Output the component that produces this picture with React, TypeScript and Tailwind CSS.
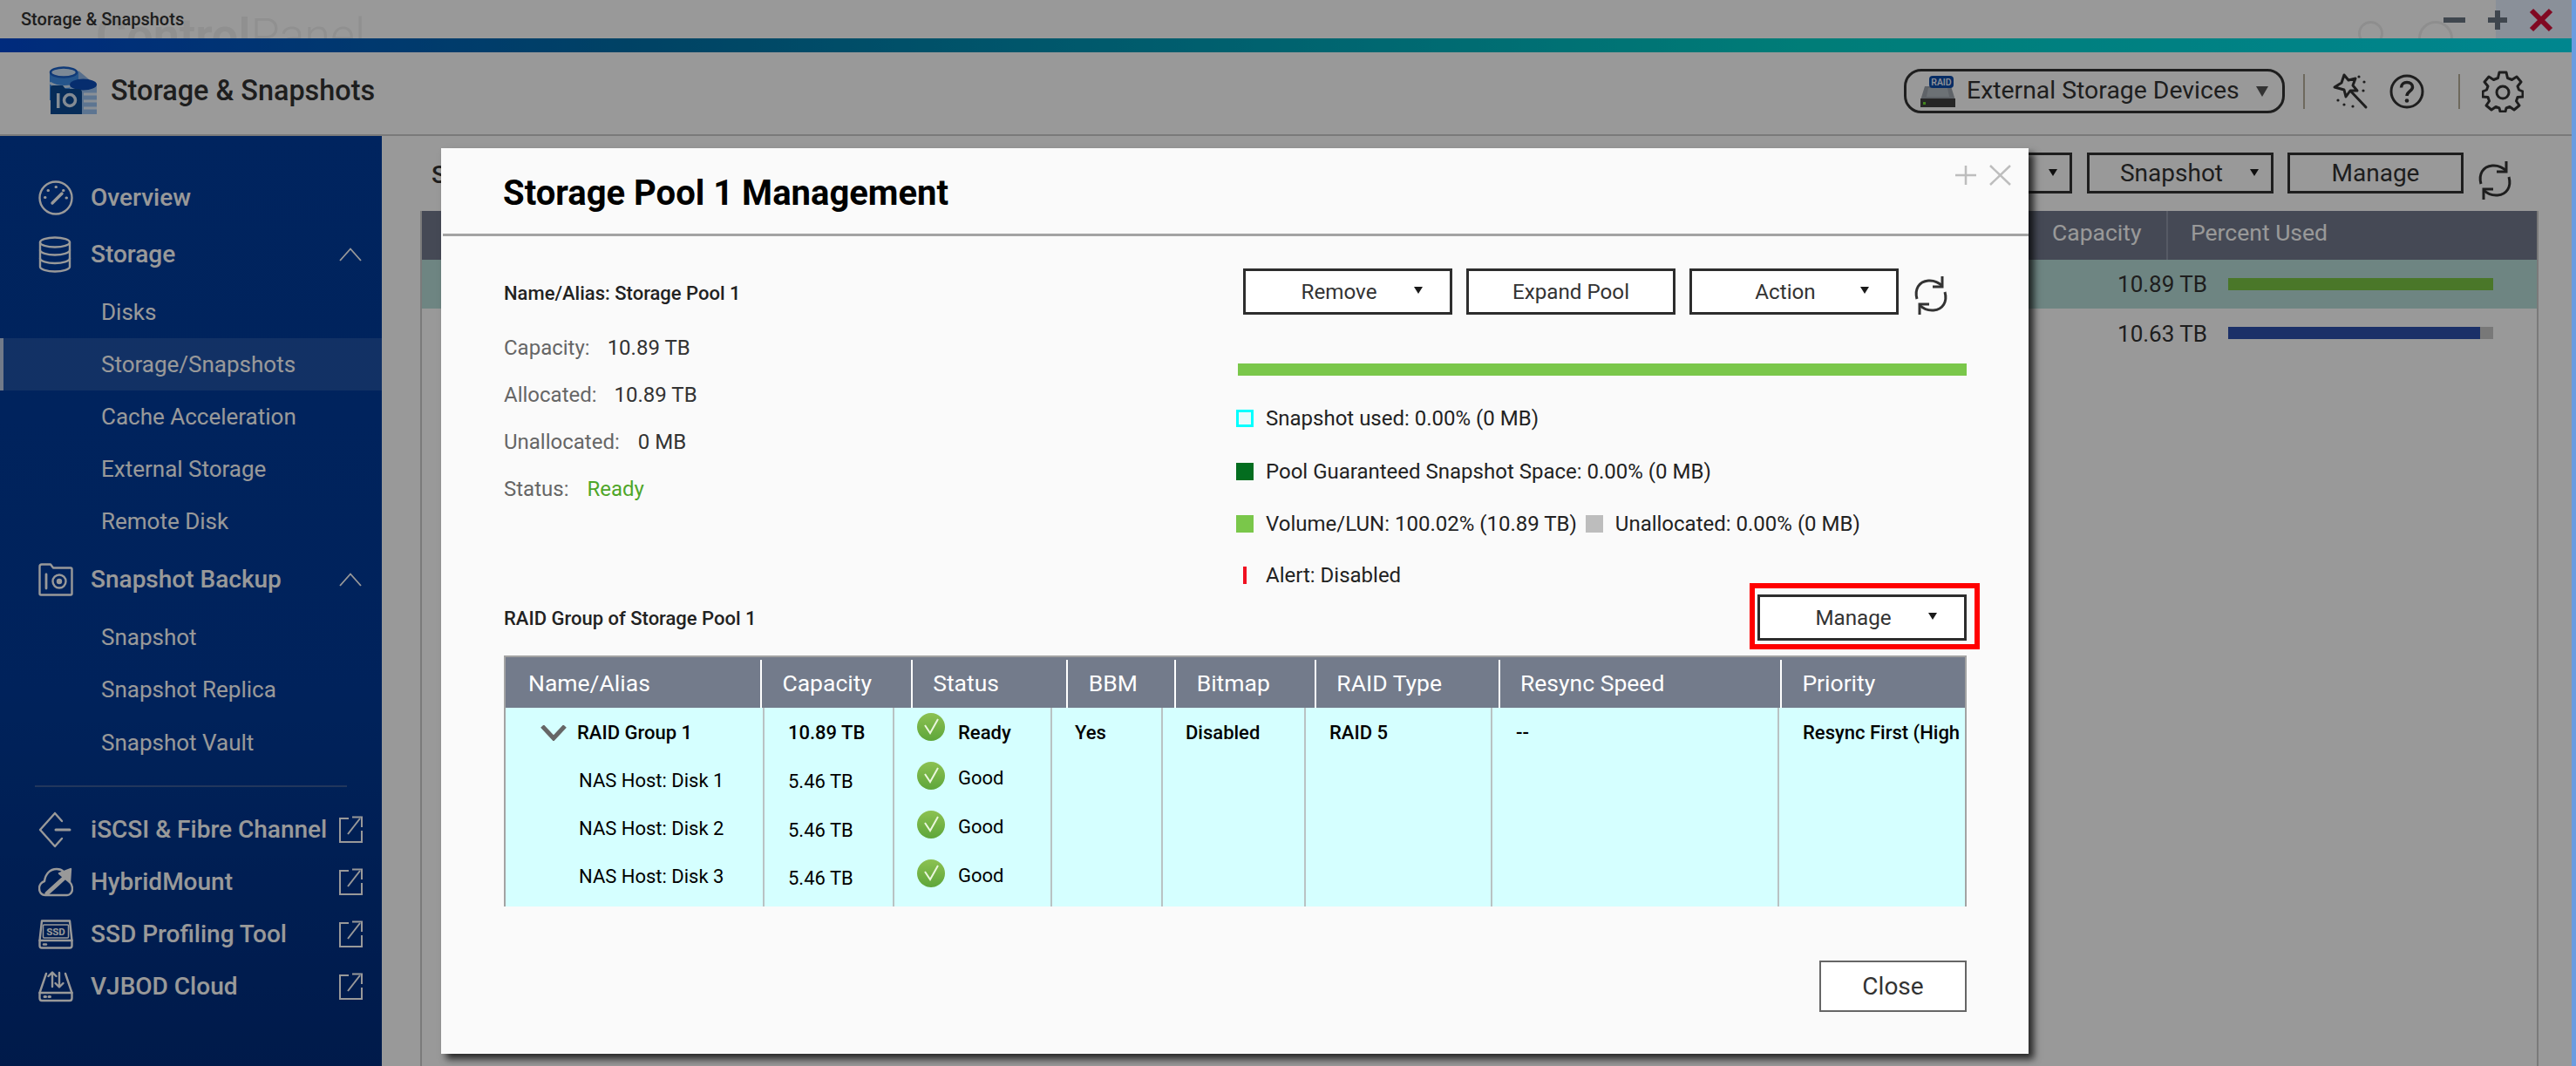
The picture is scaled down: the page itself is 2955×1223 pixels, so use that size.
import React from "react";

const Caret = ({ className = "" }: { className?: string }) => (
  <svg width="10" height="8" viewBox="0 0 10 8" className={className}>
    <polygon points="0,0 10,0 5,8" fill="#1a1a1a" />
  </svg>
);

const Refresh = ({ className = "" }: { className?: string }) => (
  <svg width="42" height="46" viewBox="0 0 40 46" fill="none" stroke="#333" strokeWidth="3" className={className}>
    <path d="M4 27C1 16 6 7 17 6C23 5.5 28 7 33 12" />
    <path d="M33 1V13H22" />
    <path d="M36 19C39 30 34 39 23 40C17 40.5 12 39 7 34" />
    <path d="M7 45V33H18" />
  </svg>
);

const Logo = () => (
  <svg width="56" height="58" viewBox="0 0 56 58">
    <path d="M1 8C1 2 34 2 34 8V40H1Z" fill="#3f8ee8" />
    <ellipse cx="17" cy="8" rx="15" ry="5.5" fill="#cfe4fa" stroke="#1c62c8" strokeWidth="2.5" />
    <path d="M1 20C10 26 26 26 34 20" stroke="#cfe4fa" strokeWidth="3" fill="none" />
    <path d="M34 6L46 16H34Z" fill="#8fb8ea" />
    <path d="M24 22C24 15 55 15 55 22V56H24Z" fill="#9cc4f2" />
    <ellipse cx="39.5" cy="22" rx="15.5" ry="6.5" fill="#0a4bb8" />
    <path d="M40 33H55M40 41H55M40 49H55" stroke="#e6f0fb" strokeWidth="3" />
    <path d="M2 56V26C2 24 3 23 5 23H16L19 27H33C36 27 38 28 38 31V56Z" fill="#0b4a94" />
    <rect x="9" y="32" width="3.5" height="17" fill="#dbe8f5" />
    <circle cx="24" cy="40" r="6.5" fill="none" stroke="#dbe8f5" strokeWidth="3.5" />
  </svg>
);

const RaidDrive = () => (
  <svg width="40" height="36" viewBox="0 0 40 36">
    <path d="M5 12H35L40 28H0Z" fill="#9ea6ae" />
    <path d="M9 14H31L33 24H7Z" fill="#b5bcc3" />
    <rect x="0" y="26" width="40" height="10" fill="#404040" />
    <rect x="3" y="30" width="3" height="3" fill="#6fe030" />
    <rect x="10" y="0" width="28" height="14" rx="4" fill="#0d4ba8" />
    <text x="24" y="11" textAnchor="middle" fontSize="10.5" fontWeight="500" fill="#f2f6ff" fontFamily="Roboto">RAID</text>
  </svg>
);

const Wand = () => (
  <svg width="42" height="42" viewBox="0 0 42 42" fill="none" stroke="#333" strokeWidth="3" strokeLinejoin="round">
    <path d="M14 2L19 8L27 6L24 14L29 20L21 20L16 27L14 19L3 16L11 11Z" />
    <path d="M22 21L39 39" strokeLinecap="round" />
    <g fill="#333" stroke="none">
      <circle cx="31" cy="4" r="1.6" /><circle cx="37" cy="10" r="1.6" /><circle cx="36" cy="20" r="1.6" />
      <circle cx="7" cy="31" r="1.6" /><circle cx="14" cy="36" r="1.6" /><circle cx="24" cy="38" r="1.6" />
    </g>
  </svg>
);

const Help = () => (
  <svg width="40" height="40" viewBox="0 0 40 40" fill="none" stroke="#333" strokeWidth="3">
    <circle cx="20" cy="20" r="18" />
    <path d="M13.5 15.5C13.5 11.5 16.5 9.5 20 9.5C24 9.5 26.5 12 26.5 15C26.5 19.5 20 20 20 25" strokeWidth="3.5" />
    <circle cx="20" cy="30.5" r="2.3" fill="#333" stroke="none" />
  </svg>
);

const Gear = () => (
  <svg width="48" height="48" viewBox="0 0 48 48" fill="none" stroke="#333" strokeWidth="3" strokeLinejoin="round">
    <path d="M20 2H28L29.5 8.5L34.5 10.5L40 7L45 13L41 18L42.5 22L47 24L47 30L41 30.5L39.5 35L43 40L37 45L32 41.5L28 43L27 47H21L20 43L16 41.5L11 45L5 40L8.5 35L7 30.5L1 30L1 24L5.5 22L7 18L3 13L8 7L13.5 10.5L18.5 8.5Z" />
    <circle cx="24" cy="25" r="7" />
  </svg>
);

const ic = { fill: "none", stroke: "#fff", strokeWidth: 2.4, strokeLinejoin: "round" as const, strokeLinecap: "round" as const };

const IconOverview = () => (
  <svg width="40" height="42" viewBox="0 0 40 42" {...ic}>
    <circle cx="20" cy="21" r="18.5" />
    <path d="M16 27L27 16" strokeWidth="3.4" />
    <g strokeWidth="3">
      <path d="M7.5 20.5h.5M11 12.5h.5M20 8.5h.5M28.5 12.5h.5M32 21h.5" />
    </g>
  </svg>
);
const IconStorage = () => (
  <svg width="38" height="42" viewBox="0 0 38 42" {...ic}>
    <ellipse cx="19" cy="7" rx="17" ry="5.5" />
    <path d="M2 7V35C2 38 10 40.5 19 40.5C28 40.5 36 38 36 35V7" />
    <path d="M2 16C2 19 10 21.5 19 21.5C28 21.5 36 19 36 16" />
    <path d="M2 25.5C2 28.5 10 31 19 31C28 31 36 28.5 36 25.5" />
  </svg>
);
const IconBackup = () => (
  <svg width="40" height="38" viewBox="0 0 40 38" {...ic}>
    <path d="M1.5 35V4C1.5 2.5 2.5 1.5 4 1.5H14L17 5.5H37C38 5.5 38.5 6 38.5 7V35C38.5 36 38 36.5 37 36.5H3C2 36.5 1.5 36 1.5 35Z" />
    <path d="M9 13V29" strokeWidth="2.8" />
    <circle cx="24" cy="21" r="7.5" />
    <circle cx="24" cy="21" r="2" fill="#fff" />
  </svg>
);
const IconIscsi = () => (
  <svg width="38" height="42" viewBox="0 0 38 42" {...ic}>
    <path d="M19 2L2 21L19 40L27 31M27 11L19 2" />
    <path d="M20 21H36" strokeWidth="3" />
  </svg>
);
const IconHybrid = () => (
  <svg width="40" height="34" viewBox="0 0 40 34" {...ic}>
    <path d="M8 32C3 32 1 28 1 24C1 20 4 17 7 16C8 8 13 2 21 2C24 2 27 3 29 5M36 17C38 19 39 22 39 25C39 29 36 32 33 32H8" />
    <path d="M10 30L32 10" strokeWidth="5" />
    <path d="M24 7L37 2L36 17Z" fill="#fff" />
  </svg>
);
const IconSsd = () => (
  <svg width="40" height="34" viewBox="0 0 40 34" {...ic}>
    <path d="M4 1.5H36L38.5 24V30C38.5 31.5 37.5 32.5 36 32.5H4C2.5 32.5 1.5 31.5 1.5 30V24Z" />
    <path d="M1.5 24H38.5" />
    <rect x="5.5" y="6" width="29" height="15" rx="1" strokeWidth="1.5" />
    <text x="20" y="18" textAnchor="middle" fontSize="11.5" fontWeight="700" fill="#fff" stroke="none" fontFamily="Roboto">SSD</text>
    <path d="M6 28.5h3" />
  </svg>
);
const IconVjbod = () => (
  <svg width="40" height="36" viewBox="0 0 40 36" {...ic}>
    <path d="M9 3L1.5 25V31C1.5 33 2.5 34 4 34H36C37.5 34 38.5 33 38.5 31V25L31 3" />
    <path d="M1.5 25H38.5" />
    <path d="M16 18V2M11.5 6L16 1.5L20.5 6" />
    <path d="M24 2V18M19.5 14L24 18.5L28.5 14" />
    <path d="M7 29.5h1.5M12 29.5h1.5" strokeWidth="3" />
  </svg>
);
const Chevron = () => (
  <svg width="26" height="16" viewBox="0 0 26 16" fill="none" stroke="#fff" strokeWidth="1.8" className="ml-auto mr-[23px]">
    <path d="M1 15L13 1.5L25 15" />
  </svg>
);
const External = () => (
  <svg width="27" height="31" viewBox="0 0 27 31" fill="none" stroke="#fff" strokeWidth="2" className="absolute right-[22px] top-[14px]">
    <path d="M11 3H1V30H26V17" />
    <path d="M10 21L24 3" />
    <path d="M15 1.5H26V13" />
  </svg>
);

const MainRow = ({ icon, label, chevron, ext, className = "" }: { icon: React.ReactNode; label: string; chevron?: boolean; ext?: boolean; className?: string }) => (
  <div className={`relative flex h-[60px] items-center pl-[44px] ${className}`}>
    <div className="flex w-[60px] shrink-0 items-center">{icon}</div>
    <span className="text-[28px] font-medium text-white">{label}</span>
    {chevron && <Chevron />}
    {ext && <External />}
  </div>
);

const SubRow = ({ label, active, className = "" }: { label: string; active?: boolean; className?: string }) => (
  <div className={`flex h-[60px] items-center text-[26px] text-white ${active ? "border-l-4 border-white/70 bg-white/12 pl-[112px]" : "pl-[116px]"} ${className}`}>{label}</div>
);

const Sidebar = () => (
  <aside className="flex w-[438px] shrink-0 flex-col bg-[linear-gradient(180deg,#003c9e_0%,#003a98_60%,#002c7c_100%)] pt-[41px]">
    <MainRow icon={<IconOverview />} label="Overview" />
    <MainRow icon={<IconStorage />} label="Storage" chevron className="mt-[5px]" />
    <SubRow label="Disks" className="mt-[6px]" />
    <SubRow label="Storage/Snapshots" active />
    <SubRow label="Cache Acceleration" />
    <SubRow label="External Storage" />
    <SubRow label="Remote Disk" />
    <MainRow icon={<IconBackup />} label="Snapshot Backup" chevron className="mt-[7px]" />
    <SubRow label="Snapshot" className="mt-[6px]" />
    <SubRow label="Snapshot Replica" />
    <SubRow label="Snapshot Vault" className="mt-px" />
    <div className="mx-[40px] mt-[19px] h-[2px] bg-[#3a5c9c]" />
    <MainRow icon={<IconIscsi />} label="iSCSI & Fibre Channel" ext className="mt-[19px]" />
    <MainRow icon={<IconHybrid />} label="HybridMount" ext />
    <MainRow icon={<IconSsd />} label="SSD Profiling Tool" ext />
    <MainRow icon={<IconVjbod />} label="VJBOD Cloud" ext />
  </aside>
);

const ToolBtn = ({ label, caret, className = "" }: { label: string; caret?: boolean; className?: string }) => (
  <div className={`relative flex h-[47px] items-center justify-center border-[3px] border-[#333] text-[28px] text-[#333] ${caret ? "pr-5" : ""} ${className}`}>
    {label}
    {caret && <Caret className="absolute right-[14px] top-[16px]" />}
  </div>
);

const Background = () => (
  <main className="flex min-w-0 flex-1 flex-col border-l-4 border-[#fff] bg-white pl-[40px] pr-[38px]">
    <div className="flex h-[66px] items-end">
      <span className="ml-[13px] text-[28px] font-medium text-[#333]">Storage/Snapshots</span>
      <div className="ml-auto flex items-center">
        <ToolBtn label="" caret className="w-[150px]" />
        <ToolBtn label="Snapshot" caret className="ml-[17px] w-[214px]" />
        <ToolBtn label="Manage" className="ml-[16px] w-[202px]" />
        <Refresh className="-mb-[8px] ml-[15px] mr-[29px] mt-[8px]" />
      </div>
    </div>
    <div className="mt-[20px] flex min-h-0 flex-1 flex-col border-x-2 border-[#ccc]">
      <div className="flex h-[56px] shrink-0 items-center bg-[#737b8e] text-[26.5px] text-white">
        <div className="ml-auto w-[131px] pb-[7px]">Capacity</div>
        <div className="flex h-full w-[425px] items-center border-l-2 border-[#8f97a8] pb-[7px] pl-[26px]">Percent Used</div>
      </div>
      <div className="flex h-[56px] shrink-0 items-center justify-end bg-[#b8ded9] pr-[50px] text-[26px] text-[#333]">
        <span className="mr-[24px]">10.89 TB</span>
        <div className="h-[14px] w-[304px] bg-[#7cc745]" />
      </div>
      <div className="flex h-[56px] shrink-0 items-center justify-end pr-[50px] text-[26px] text-[#333]">
        <span className="mr-[24px] pt-[2px]">10.63 TB</span>
        <div className="flex h-[14px] w-[304px] bg-[#c8c8c8]">
          <div className="h-full w-[289px] bg-[#2e50ae]" />
        </div>
      </div>
    </div>
  </main>
);

const DlgBtn = ({ label, caret, className = "" }: { label: string; caret?: boolean; className?: string }) => (
  <div className={`relative flex h-[53px] w-[240px] shrink-0 items-center justify-center border-[3px] border-[#2d2d2d] bg-white pt-[2px] text-[24.2px] text-[#333] ${caret ? "pr-5" : ""} ${className}`}>
    {label}
    {caret && <Caret className="absolute right-[31px] top-[18px]" />}
  </div>
);

const Legend = ({ color, label }: { color: string; label: string }) => (
  <span className="flex items-center">
    <span className={`mr-[14px] size-[20px] shrink-0 ${color}`} />
    <span>{label}</span>
  </span>
);

const headers: [string, string][] = [
  ["Name/Alias", "w-[295px] pl-[26px]"],
  ["Capacity", "w-[173px] pl-[23px]"],
  ["Status", "w-[178px] pl-[23px]"],
  ["BBM", "w-[124px] pl-[24px]"],
  ["Bitmap", "w-[162px] pl-[24px]"],
  ["RAID Type", "w-[211px] pl-[23px]"],
  ["Resync Speed", "w-[324px] pl-[23px]"],
  ["Priority", "w-[210px] pl-[23px]"],
];

const Check = () => (
  <svg width="32" height="32" viewBox="0 0 32 32" className="shrink-0">
    <defs>
      <linearGradient id="chk" x1="0" y1="0" x2="0" y2="1">
        <stop offset="0" stopColor="#8cc152" />
        <stop offset="1" stopColor="#5ea63a" />
      </linearGradient>
    </defs>
    <circle cx="16" cy="16" r="16" fill="url(#chk)" />
    <path d="M9 14L15 23L24 7" fill="none" stroke="#eaf6dc" strokeWidth="2" />
  </svg>
);

const Table = () => (
  <div className="mt-[17px] flex h-[288px] shrink-0 flex-col border-x-[2px] border-t-[2px] border-[#a3a3a3]">
    <div className="flex h-[58px] shrink-0 bg-[#737b8b] text-[26.5px] text-white">
      {headers.map(([h, w], i) => (
        <div key={h} className={`mt-[3px] flex items-center pb-[1px] ${w} ${i < 7 ? "border-r-2 border-white" : ""}`}>{h}</div>
      ))}
    </div>
    <div className="flex min-h-0 flex-1 overflow-hidden bg-[#d5ffff] text-[22px] font-medium leading-[28px] text-black">
      <div className="w-[297px] shrink-0 border-r-2 border-[#b9c2c3]">
        <div className="mt-[15px] flex items-center pl-[40px]">
          <svg width="30" height="18" viewBox="0 0 30 18" fill="none" stroke="#666" strokeWidth="5" className="mr-[12px]"><path d="M2 1L15 15L28 1" /></svg>
          RAID Group 1
        </div>
        <div className="mt-[27px] flex flex-col gap-[27px] pl-[84px] font-normal">
          <div>NAS Host: Disk 1</div>
          <div>NAS Host: Disk 2</div>
          <div>NAS Host: Disk 3</div>
        </div>
      </div>
      <div className="flex w-[149px] shrink-0 flex-col border-r-2 border-[#b9c2c3] pl-[27px] pt-[15px]">
        <div>10.89 TB</div>
        <div className="mt-[28px] flex flex-col gap-[27.5px] font-normal">
          <div>5.46 TB</div>
          <div>5.46 TB</div>
          <div>5.46 TB</div>
        </div>
      </div>
      <div className="flex w-[181px] shrink-0 flex-col gap-[24px] border-r-2 border-[#b9c2c3] pl-[26px] pt-[6px]">
        <div className="flex h-[32px] items-start"><Check /><span className="ml-[15px] mt-[9px]">Ready</span></div>
        <div className="flex h-[32px] items-start font-normal"><Check /><span className="ml-[15px] mt-[5px]">Good</span></div>
        <div className="flex h-[32px] items-start font-normal"><Check /><span className="ml-[15px] mt-[5px]">Good</span></div>
        <div className="flex h-[32px] items-start font-normal"><Check /><span className="ml-[15px] mt-[5px]">Good</span></div>
      </div>
      <div className="w-[127px] shrink-0 border-r-2 border-[#b9c2c3] pl-[26px] pt-[15px]">Yes</div>
      <div className="w-[164px] shrink-0 border-r-2 border-[#b9c2c3] pl-[26px] pt-[15px]">Disabled</div>
      <div className="w-[214px] shrink-0 border-r-2 border-[#b9c2c3] pl-[27px] pt-[15px]">RAID 5</div>
      <div className="w-[329px] shrink-0 border-r-2 border-[#b9c2c3] pl-[27px] pt-[15px]">--</div>
      <div className="min-w-0 flex-1 overflow-hidden whitespace-nowrap pl-[27px] pt-[15px]">Resync First (High Priority)</div>
    </div>
  </div>
);

const Modal = () => (
  <div className="absolute left-[506px] top-[170px] flex h-[1039px] w-[1821px] flex-col bg-[#fafafa] shadow-[6px_6px_8px_rgba(0,0,0,0.75)]">
    <div className="relative ml-[2px] flex h-[101px] shrink-0 items-center border-b-[3px] border-[#a3a3a3] pl-[69px] pt-[6px]">
      <h1 className="text-[40px] font-bold leading-none text-black">Storage Pool 1 Management</h1>
      <svg width="66" height="26" viewBox="0 0 66 26" fill="none" stroke="#bdbdbd" strokeWidth="2.5" className="absolute right-[19px] top-[18px]">
        <path d="M13 2V24M1 13H25" />
        <path d="M41 2L64 24M64 2L41 24" />
      </svg>
    </div>
    <div className="flex flex-1 flex-col pl-[72px] pr-[71px]">
      <div className="flex h-[409px] shrink-0">
        <div className="flex flex-col text-[24px] text-[#666]">
          <div className="mt-[49px] text-[22px] font-medium text-[#222]">Name/Alias: Storage Pool 1</div>
          <div className="mt-[28px] flex gap-[20px]"><span>Capacity:</span><span className="text-[#333]">10.89 TB</span></div>
          <div className="mt-[18px] flex gap-[20px]"><span>Allocated:</span><span className="text-[#333]">10.89 TB</span></div>
          <div className="mt-[18px] flex gap-[21px]"><span>Unallocated:</span><span className="text-[#333]">0 MB</span></div>
          <div className="mt-[18px] flex gap-[21px]"><span>Status:</span><span className="text-[#4fa629]">Ready</span></div>
        </div>
        <div className="ml-auto flex w-[838px] flex-col text-[24px] text-[#222]">
          <div className="ml-[8px] mt-[37px] flex items-start gap-[16px]">
            <DlgBtn label="Remove" caret />
            <DlgBtn label="Expand Pool" />
            <DlgBtn label="Action" caret />
            <Refresh className="ml-0 mt-[8px] w-[42px]" />
          </div>
          <div className="ml-[2px] mt-[55px] h-[14px] shrink-0 bg-[#7ac74a]" />
          <div className="mt-[35px] flex h-[28px] shrink-0 items-center">
            <span className="mr-[14px] size-[20px] shrink-0 border-[3px] border-[#00ffff] bg-[#e8fbfb]" />
            <span>Snapshot used: 0.00% (0 MB)</span>
          </div>
          <div className="mt-[33px] flex h-[28px] shrink-0 items-center">
            <Legend color="bg-[#036d1f]" label="Pool Guaranteed Snapshot Space: 0.00% (0 MB)" />
          </div>
          <div className="mt-[32px] flex h-[28px] shrink-0 items-center gap-[10px]">
            <Legend color="bg-[#7ac74a]" label="Volume/LUN: 100.02% (10.89 TB)" />
            <Legend color="bg-[#bdbdbd]" label="Unallocated: 0.00% (0 MB)" />
          </div>
          <div className="mt-[31px] flex h-[28px] shrink-0 items-center">
            <span className="ml-[8px] mr-[22px] h-[20px] w-[4px] bg-[#f01020]" />
            <span>Alert: Disabled</span>
          </div>
        </div>
      </div>
      <div className="mt-[2px] flex h-[53px] shrink-0 items-center justify-between">
        <span className="pt-[2px] text-[22px] font-medium text-[#222]">RAID Group of Storage Pool 1</span>
        <div className="relative">
          <DlgBtn label="Manage" caret />
          <div className="absolute -bottom-[10px] -left-[9px] -right-[15px] -top-[13px] border-[6px] border-[#ff0000]" />
        </div>
      </div>
      <Table />
      <div className="mt-[62px] flex h-[59px] w-[169px] shrink-0 items-center justify-center self-end border-2 border-[#666] bg-white text-[28px] text-[#333]">Close</div>
    </div>
  </div>
);

export default function App() {
  return (
    <div className="relative flex h-[1223px] w-[2955px] overflow-hidden bg-[#6a9ce0] font-[Roboto,sans-serif]">
      <div className="flex h-full w-[2950px] shrink-0 flex-col bg-white">
        <div className="relative flex h-[44px] shrink-0 items-center overflow-hidden pl-[24px]">
          <span className="absolute left-[110px] top-[14px] whitespace-nowrap text-[54px] leading-none text-[#f0f0f0]"><b className="font-semibold">Control</b><span className="font-light">Panel</span></span>
          <span className="relative text-[20px] font-medium text-[#333]">Storage & Snapshots</span>
          <span className="absolute left-[2705px] top-[24px] size-[29px] rounded-full border-[3px] border-[#ededed]" />
          <span className="absolute left-[2774px] top-[24px] size-[40px] rounded-full border-[3px] border-[#ededed]" />
          <div className="absolute inset-y-0 right-0 w-[87px] bg-[#e6f0ff]" />
          <svg width="126" height="28" viewBox="0 0 126 28" className="absolute right-[21px] top-[9px]" fill="none" strokeWidth="6">
            <path d="M0 14H25" stroke="#6a7682" />
            <path d="M62 3V25M51 14H73" stroke="#6a7682" />
            <path d="M101 3L123 25M123 3L101 25" stroke="#d8103a" />
          </svg>
        </div>
        <div className="h-[16px] shrink-0 bg-[linear-gradient(90deg,#0048d0_0%,#0070a8_25%,#00d0c8_70%,#00e0ee_100%)]" />
        <header className="flex h-[96px] shrink-0 items-center border-b-2 border-[#ccc] pb-[5px] pl-[56px]">
          <span className="-mt-[2px] flex"><Logo /></span>
          <span className="ml-[15px] text-[32.4px] font-medium text-[#333]">Storage & Snapshots</span>
          <div className="ml-auto flex h-[51px] w-[437px] items-center rounded-[20px] border-[3px] border-[#333] pl-[16px]">
            <RaidDrive />
            <span className="ml-[13px] text-[28.4px] text-[#333]">External Storage Devices</span>
            <svg width="14" height="12" viewBox="0 0 14 12" className="ml-[19px]"><polygon points="0,0 14,0 7,12" fill="#555" /></svg>
          </div>
          <div className="ml-[21px] h-[40px] w-[2px] bg-[#b8b09c]" />
          <div className="ml-[31px] flex items-center gap-[24px]"><Wand /><Help /></div>
          <div className="ml-[39px] h-[40px] w-[2px] bg-[#b8b09c]" />
          <div className="ml-[25px] mr-[55px]"><Gear /></div>
        </header>
        <div className="flex min-h-0 flex-1">
          <Sidebar />
          <Background />
        </div>
      </div>
      <div className="absolute inset-y-0 left-0 w-[2950px] bg-[rgba(0,0,0,0.4)]" />
      <Modal />
    </div>
  );
}
